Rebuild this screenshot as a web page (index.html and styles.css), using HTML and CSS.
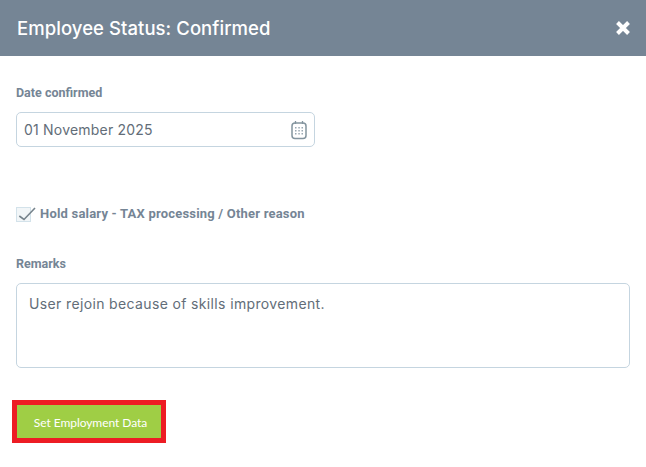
FILE: index.html
```html
<!DOCTYPE html>
<html lang="en">
<head>
<meta charset="utf-8">
<title>Employee Status</title>
<link rel="stylesheet" href="styles.css">
</head>
<body>
<header class="head">
  <h1 class="title">Employee Status: Confirmed</h1>
  <svg class="close" width="16" height="16" viewBox="0 0 16 16" aria-label="Close"><path d="M2.5 2.5 13.5 13.5M13.5 2.5 2.5 13.5" stroke="#fff" stroke-width="4" fill="none"/></svg>
</header>
<main class="body">
  <div class="label">Date confirmed</div>
  <div class="input date">
    <span class="date-text">01 November 2025</span>
    <svg class="cal" width="16" height="20" viewBox="0 0 16 20" fill="none">
      <rect x="1" y="3" width="14" height="15.5" rx="3" stroke="#84959f" stroke-width="1.5"/>
      <path d="M4.5 1v3M11.500 1v3" stroke="#84959f" stroke-width="1.3"/>
      <g fill="#9aa8b2"><rect x="4" y="7" width="1.500" height="1.500"/><rect x="7.300" y="7" width="1.500" height="1.500"/><rect x="10.500" y="7" width="1.500" height="1.500"/><rect x="4" y="10" width="1.500" height="1.500"/><rect x="7.300" y="10" width="1.500" height="1.500"/><rect x="10.500" y="10" width="1.500" height="1.500"/><rect x="4" y="13" width="1.500" height="1.500"/><rect x="7.300" y="13" width="1.500" height="1.500"/><rect x="10.500" y="13" width="1.500" height="1.500"/></g>
    </svg>
  </div>
  <div class="check-row">
    <span class="box"><svg class="tick" width="24" height="18" viewBox="0 0 24 18" fill="none"><path d="M5.300 11 10 14.500 21 3" stroke="#76838c" stroke-width="1.600"/></svg></span>
    <span class="check-label">Hold salary - TAX processing / Other reason</span>
  </div>
  <div class="label remarks-label">Remarks</div>
  <div class="input area">User rejoin because of skills improvement.</div>
  <div class="action"><button class="btn" type="button">Set Employment Data</button></div>
</main>
</body>
</html>
```
FILE: styles.css
```css
* { box-sizing: border-box; }
html, body { margin: 0; padding: 0; background: #fff; }
body { width: 646px; height: 467px; overflow: hidden; }
.head {
  height: 56px;
  background: #758595;
  display: flex;
  align-items: center;
  justify-content: space-between;
  padding: 0 15px 0 17px;
}
.title {
  margin: 0;
  font: 500 18.500px/24px "Inter", sans-serif;
  color: #fff;
  letter-spacing: 0.06px;
}
.body { padding: 29px 16px 0; }
.label {
  font: 700 12.500px/16px "Roboto", sans-serif;
  color: #758595;
}
.input {
  border: 1px solid #c5d5e0;
  border-radius: 5px;
  font: 400 14px/20px "Inter", sans-serif;
  color: #626d78;
}
.date {
  width: 299px;
  height: 35px;
  margin-top: 11px;
  padding: 0 7px;
  display: flex;
  align-items: center;
  justify-content: space-between;
}
.date-text { letter-spacing: 0.2px; }
.check-row {
  margin-top: 59px;
  height: 16px;
  display: flex;
  align-items: center;
  gap: 9px;
}
.box {
  position: relative;
  width: 15px;
  height: 15px;
  border: 1px solid #d3e2ea;
  background: #f2f6f8;
}
.tick { position: absolute; left: -3px; top: -3px; }
.check-label {
  font: 700 13px/16px "Roboto", sans-serif;
  color: #758595;
  letter-spacing: 0.2px;
}
.remarks-label { margin-top: 34px; }
.area {
  width: 614px;
  height: 85px;
  margin-top: 11px;
  padding: 10px 12px;
  letter-spacing: 0.36px;
}
.action { margin-top: 32px; margin-left: -4px; }
.btn {
  display: block;
  width: 154px;
  height: 43px;
  border: 5px solid #ed1c24;
  background: #9fce45;
  color: #fff;
  font: 400 12px/16px "Lato", sans-serif;
  padding: 2px 0 0 3px;
  letter-spacing: -0.06px;
}
```
